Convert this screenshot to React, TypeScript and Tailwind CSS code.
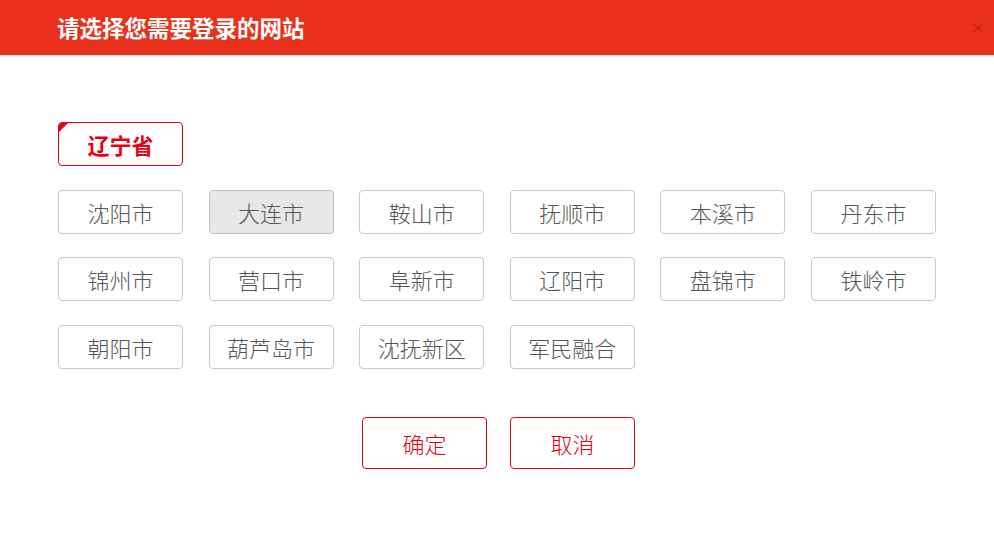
import React from "react";

const rows = [
  ["沈阳市", "大连市", "鞍山市", "抚顺市", "本溪市", "丹东市"],
  ["锦州市", "营口市", "阜新市", "辽阳市", "盘锦市", "铁岭市"],
  ["朝阳市", "葫芦岛市", "沈抚新区", "军民融合"],
];

export default function App() {
  return (
    <div
      className="w-[994px] h-[533px] bg-white overflow-hidden"
      style={{ fontFamily: '"Noto Sans CJK SC", "Noto Sans", sans-serif' }}
    >
      <div className="relative h-[56px] bg-[#e8301a] border-b border-[#dddddd] flex items-center pl-[57px]">
        <span className="text-white font-bold text-[22.5px] leading-none">请选择您需要登录的网站</span>
        <svg
          className="absolute right-[11px] top-[23px]"
          width="10"
          height="10"
          viewBox="0 0 10 10"
        >
          <path d="M1 1 L9 9 M9 1 L1 9" stroke="#c42512" strokeWidth="1.4" />
        </svg>
      </div>

      <div className="pl-[58px] pt-[66px] flex flex-col gap-[23.5px]">
        <div className="relative w-[125px] h-[44px] border border-[#e60012] rounded-[4px] flex items-center justify-center overflow-hidden">
          <div className="absolute left-0 top-0 w-0 h-0 border-t-[9px] border-r-[9px] border-t-[#e60012] border-r-transparent" />
          <span className="text-[#e60012] font-bold text-[22px] leading-none">辽宁省</span>
        </div>
        {rows.map((row, i) => (
          <div key={i} className="flex gap-[25.6px]">
            {row.map((c) => (
              <div
                key={c}
                className={`w-[125px] h-[44px] border rounded-[4px] flex items-center justify-center ${
                  c === "大连市" ? "bg-[#e8e7e8] border-[#c0c0c0]" : "bg-white border-[#c8c8c8]"
                }`}
              >
                <span className="text-[#555555] font-light text-[22px] leading-none">{c}</span>
              </div>
            ))}
          </div>
        ))}
      </div>

      <div className="flex justify-center gap-[23px] mt-[48px] pl-[3px]">
        <div className="w-[125px] h-[52px] border border-[#e60012] rounded-[4px] flex items-center justify-center">
          <span className="text-[#e60012] font-light text-[22px] leading-none">确定</span>
        </div>
        <div className="w-[125px] h-[52px] border border-[#e60012] rounded-[4px] flex items-center justify-center">
          <span className="text-[#e60012] font-light text-[22px] leading-none">取消</span>
        </div>
      </div>
    </div>
  );
}
